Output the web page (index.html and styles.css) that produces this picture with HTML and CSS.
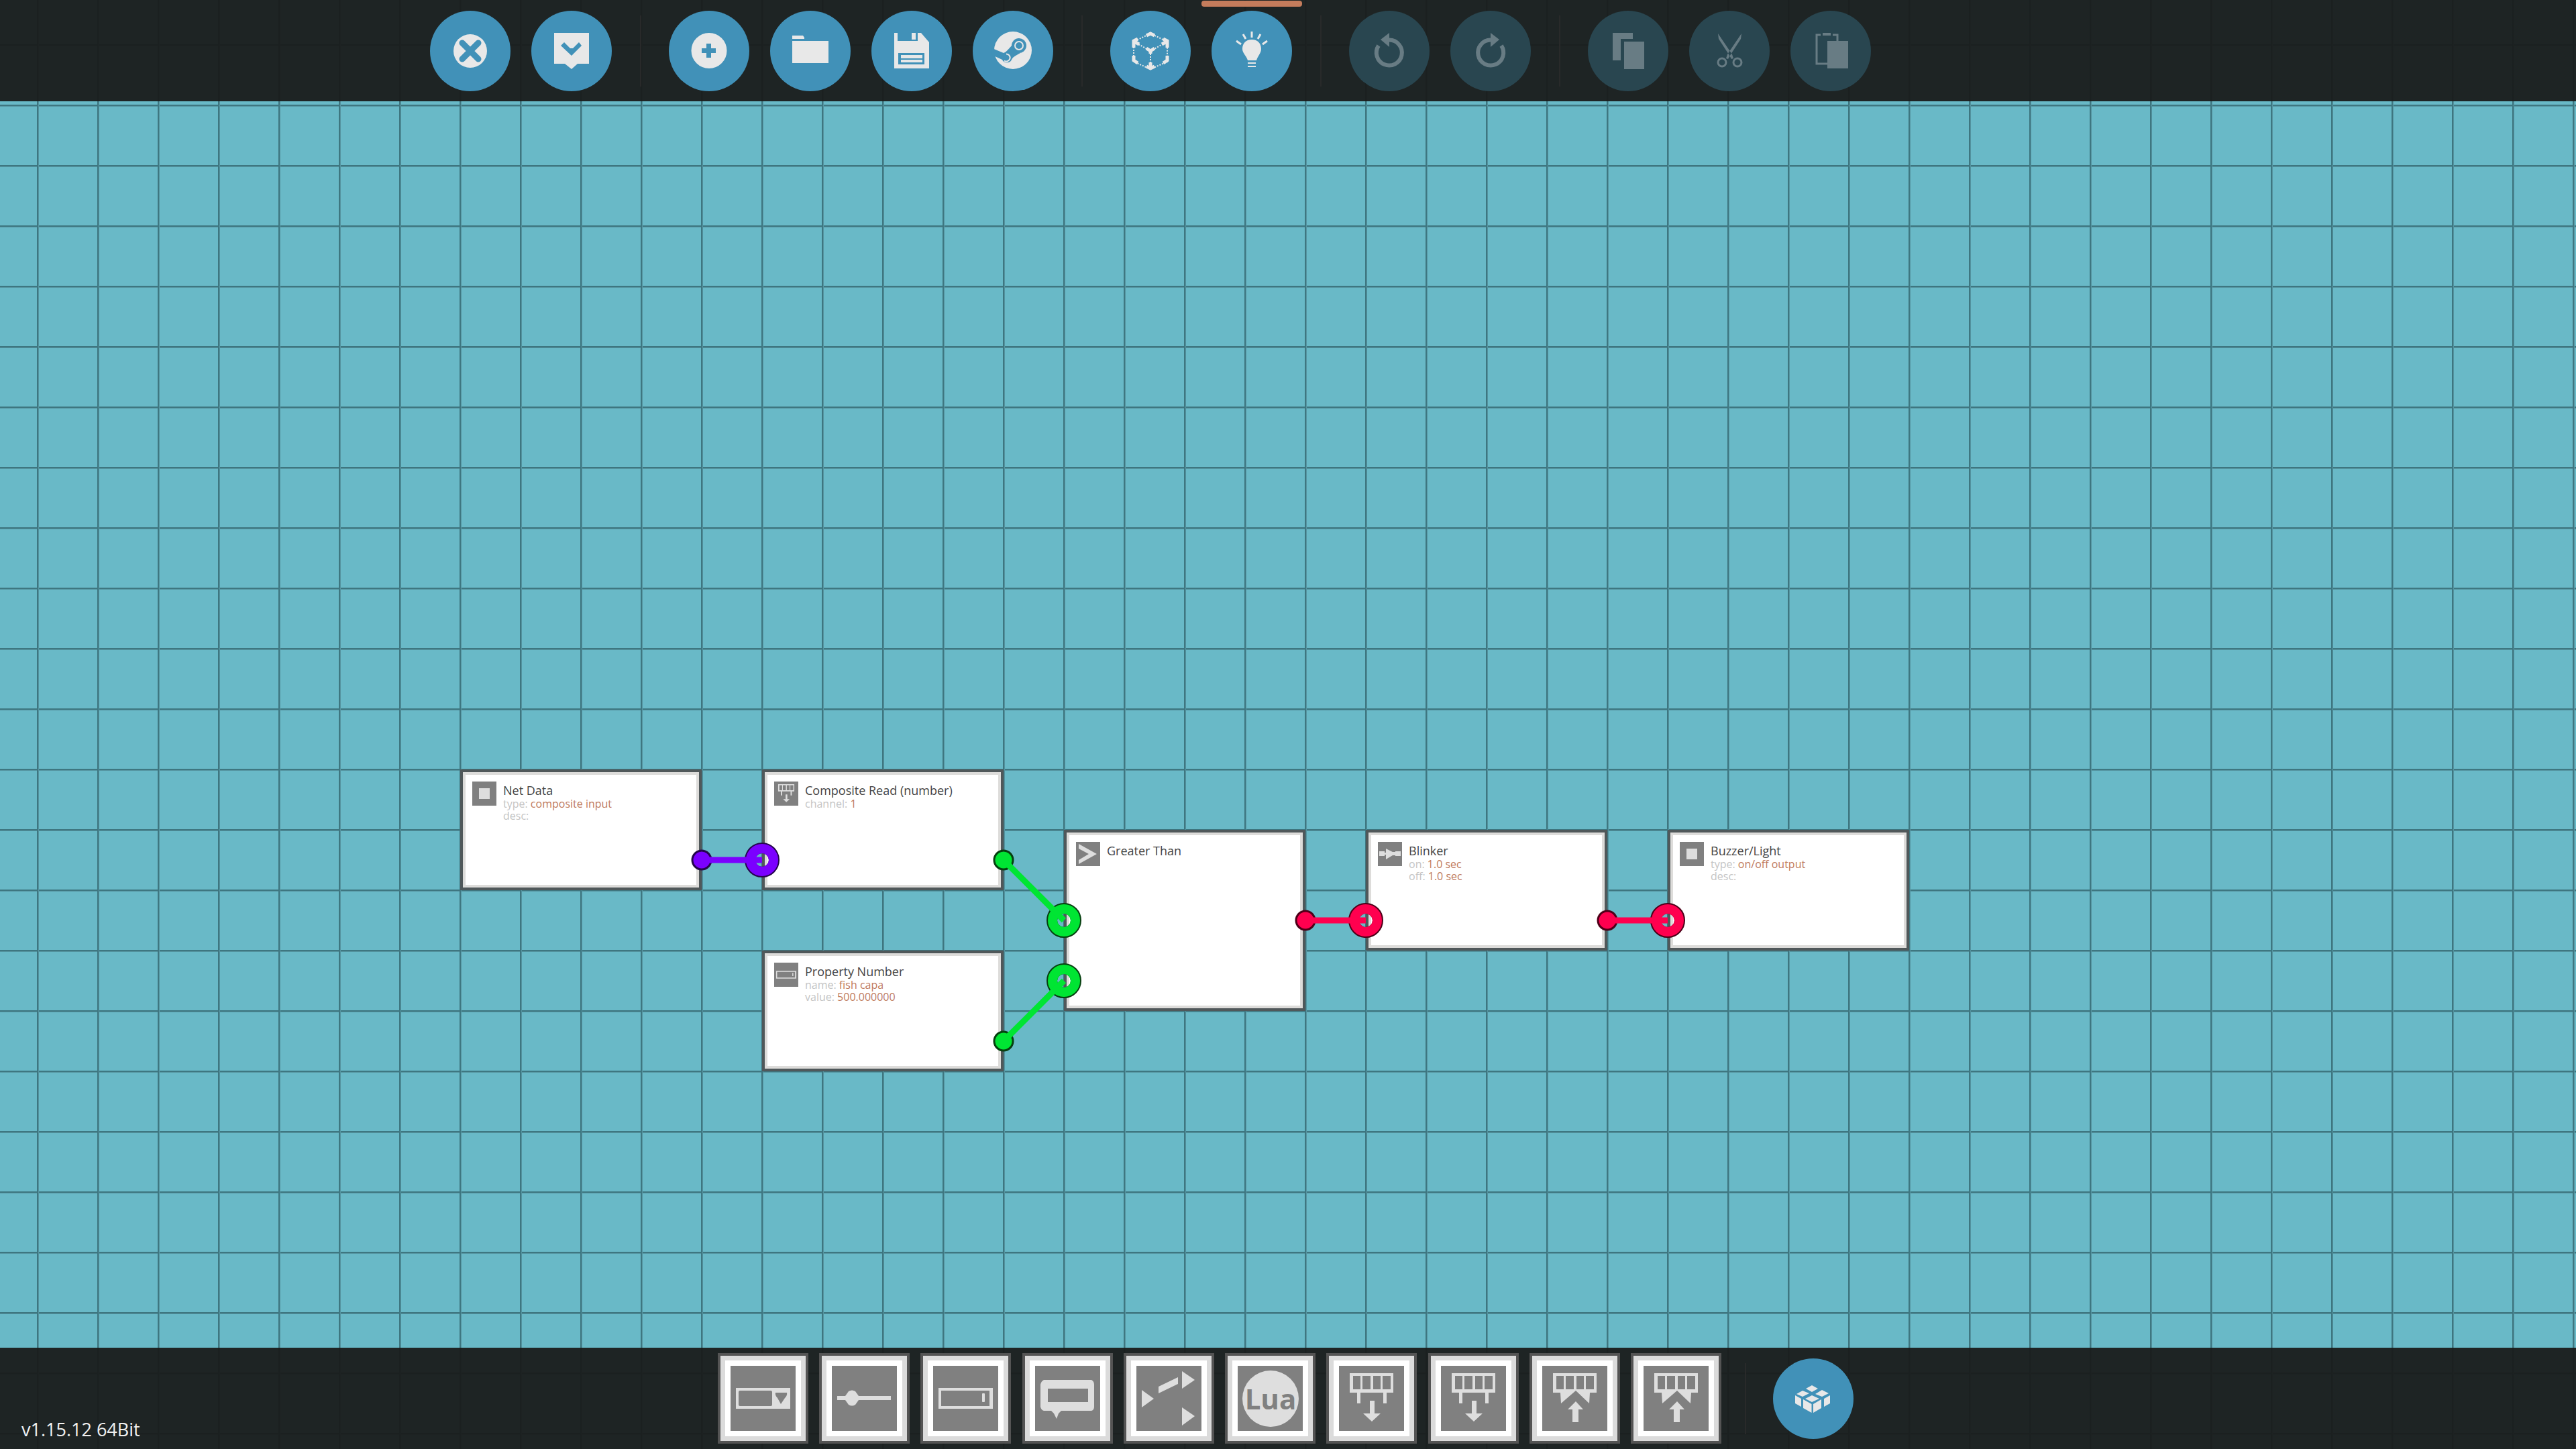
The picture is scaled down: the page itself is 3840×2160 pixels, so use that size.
FILE: index.html
```html
<!DOCTYPE html>
<html lang="en">
<head>
<meta charset="utf-8">
<title>Microcontroller Editor</title>
<link rel="stylesheet" href="styles.css">
</head>
<body>
<svg class="symbols" aria-hidden="true">
  <symbol id="i-dropdown" viewBox="0 0 97 97"><path fill-rule="evenodd" d="M8 33H89V64H8ZM14 37Q12 37 12 39V58Q12 60 14 60H60Q62 60 62 58V39Q62 37 60 37ZM67 40Q66 44 70 48L75 57L81 48Q85 44 84 40Z"/></symbol>
  <symbol id="i-slider" viewBox="0 0 97 97"><path d="M8 45H20L25 38Q30 35 35 38L40 45H88V51H40L35 58Q30 61 25 58L20 51H8Z"/></symbol>
  <symbol id="i-number" viewBox="0 0 97 97"><path fill-rule="evenodd" d="M8 33H89V64H8ZM12 37V60H84V37Z"/><rect x="73" y="41" width="4" height="13" rx="1"/></symbol>
  <symbol id="i-tooltip" viewBox="0 0 97 97"><path fill-rule="evenodd" d="M13 21H84Q88 23 88 28V61Q88 66 84 67H39L35 71L32 79L28 71L24 67H13Q9 66 8 61V28Q9 23 13 21ZM19 34V54H79V34Z"/></symbol>
  <symbol id="i-switch" viewBox="0 0 97 97"><path d="M8 36L26 49L8 62ZM68 8L87 21L68 34ZM68 62L87 75L68 89ZM33 31L62 17V27L33 41Z"/></symbol>
  <symbol id="i-read" viewBox="0 0 97 97"><path fill-rule="evenodd" d="M16 11H81V40H71V56H66V40H32V56H27V40H16ZM21 15V35H32V15ZM35 15V35H47V15ZM51 15V35H62V15ZM65 15V35H77V15ZM46 52H53V71H62L49 83L36 71H46Z"/></symbol>
  <symbol id="i-write" viewBox="0 0 97 97"><path fill-rule="evenodd" d="M16 11H81V40H71L70 56L50 37L28 56L27 40H16ZM21 15V35H32V15ZM35 15V35H47V15ZM51 15V35H62V15ZM65 15V35H77V15ZM50 53L61 65H54V84H45V65H38Z"/></symbol>
  <symbol id="i-square" viewBox="0 0 36 36"><path d="M10 10H26V26H10Z"/></symbol>
  <symbol id="i-greater" viewBox="0 0 36 36"><path d="M4 3L31 18L4 33V27L19 18L4 10Z"/></symbol>
  <symbol id="i-blinker" viewBox="0 0 36 36"><path d="M2 14H10V16H12V10L22 15H26V14H34V21H26V20H22L12 26V19H10V21H2Z"/></symbol>
</svg>

<header class="bar toolbar">
  <div class="group">
    <button class="round" aria-label="Close"><svg viewBox="0 0 120 120"><circle cx="60" cy="60" r="25"/><path class="cut round-cap" d="M48 48L72 72M72 48L48 72"/></svg></button>
    <button class="round" aria-label="Place"><svg viewBox="0 0 120 120"><path fill-rule="evenodd" d="M34 33H86V79H69L60 87L50 79H34ZM49 47L44 52L60 67L75 52L71 47L62 56H58Z"/></svg></button>
  </div>
  <div class="separator"></div>
  <div class="group">
    <button class="round" aria-label="New"><svg viewBox="0 0 120 120"><path fill-rule="evenodd" d="M60 33A26.500 26.500 0 0 1 60 86A26.500 26.500 0 0 1 60 33ZM56 49V56H49V63H56V70H63V63H70V56H63V49Z"/></svg></button>
    <button class="round" aria-label="Open"><svg viewBox="0 0 120 120"><path d="M33 37H49L51 40V42H33ZM33 45H87V78H33Z"/></svg></button>
    <button class="round" aria-label="Save"><svg viewBox="0 0 120 120"><path fill-rule="evenodd" d="M34 33H39V45H69V33H74L86 47V86H34ZM40 63V80H79V63Z"/><path d="M60 33H66V43H60ZM44 66H76V71H44ZM44 73H76V77H44Z"/></svg></button>
    <button class="round" aria-label="Steam Workshop"><svg viewBox="0 0 120 120"><circle cx="60" cy="59" r="28"/><path class="hole" d="M28 55.500L46 63C49 62 51 60 59 51L71 63C62 68 59 70 58 73A7.800 7.800 0 0 1 44 73L29 66Z"/><circle class="hole" cx="69" cy="52" r="11"/><circle class="ring" cx="69" cy="52" r="6"/><path class="ring" d="M50 64.500A5.500 5.500 0 1 1 47 74.500"/></svg></button>
  </div>
  <div class="separator"></div>
  <div class="group">
    <button class="round" aria-label="Wireframe"><svg viewBox="0 0 120 120"><path class="dotted" d="M60 34L35 46L60 60L85 46ZM35 46V76L60 87L85 76V46M60 60V87"/><path class="corners" d="M54 37L60 34L66 37M35 55V45L41 42M36 46L43 50M85 55V45L79 42M84 46L77 50M54 56L60 60L66 56M60 60V64M35 67V74L41 78M85 67V74L79 78M60 77V86M54 83L60 86L66 83"/></svg></button>
    <button class="round active" aria-label="Logic"><svg viewBox="0 0 120 120"><path d="M60 43C69 43 74 49 74 57C74 63 69 67 67 74H54C52 67 46 63 46 57C46 49 51 43 60 43ZM54 77H66V79H54ZM54 82H66V84H54Z"/><path class="rays" d="M60 31V40M47 35L51 42M73 35L69 42M37 45L44 50M83 45L76 50"/></svg></button>
  </div>
  <div class="separator"></div>
  <div class="group">
    <button class="round" disabled aria-label="Undo"><svg viewBox="0 0 120 120"><path class="turn" d="M60 43.500A19 19 0 1 1 44 52"/><path d="M60 33V54L47 43Z"/></svg></button>
    <button class="round" disabled aria-label="Redo"><svg viewBox="0 0 120 120"><path class="turn" d="M60 43.500A19 19 0 1 0 76 52"/><path d="M60 33V54L73 43Z"/></svg></button>
  </div>
  <div class="separator"></div>
  <div class="group">
    <button class="round" disabled aria-label="Copy"><svg viewBox="0 0 120 120"><path d="M37 33H67V42H49V74H37ZM54 46H84V87H54Z"/></svg></button>
    <button class="round" disabled aria-label="Cut"><svg viewBox="0 0 120 120"><path d="M43 34L64 65L66 71L63 72L59 65L44 42ZM78 34L57 65L55 71L58 72L62 65L77 42Z"/><circle class="ring thick" cx="49" cy="77" r="6"/><circle class="ring thick" cx="72" cy="77" r="6"/></svg></button>
    <button class="round" disabled aria-label="Paste"><svg viewBox="0 0 120 120"><path class="ring thick" d="M45 36H39V79H56M63 36H70V46"/><path d="M48 33H60V37H48ZM55 45H86V86H55Z"/></svg></button>
  </div>
</header>

<main class="canvas">
  <article class="node net-data">
    <svg class="node-icon"><use href="#i-square"/></svg>
    <div class="node-text"><h2>Net Data</h2><p>type: <span>composite input</span></p><p>desc:</p></div>
  </article>
  <article class="node composite-read">
    <svg class="node-icon"><use href="#i-read"/></svg>
    <div class="node-text"><h2>Composite Read (number)</h2><p>channel: <span>1</span></p></div>
  </article>
  <article class="node property-number">
    <svg class="node-icon"><use href="#i-number"/></svg>
    <div class="node-text"><h2>Property Number</h2><p>name: <span>fish capa</span></p><p>value: <span>500.000000</span></p></div>
  </article>
  <article class="node greater-than">
    <svg class="node-icon"><use href="#i-greater"/></svg>
    <div class="node-text"><h2>Greater Than</h2></div>
  </article>
  <article class="node blinker">
    <svg class="node-icon"><use href="#i-blinker"/></svg>
    <div class="node-text"><h2>Blinker</h2><p>on: <span>1.0 sec</span></p><p>off: <span>1.0 sec</span></p></div>
  </article>
  <article class="node buzzer">
    <svg class="node-icon"><use href="#i-square"/></svg>
    <div class="node-text"><h2>Buzzer/Light</h2><p>type: <span>on/off output</span></p><p>desc:</p></div>
  </article>
  <svg class="wires" aria-hidden="true">
    <g class="composite">
      <circle class="out" cx="1046" cy="1131" r="14"/>
      <circle class="rim" cx="1136" cy="1131" r="18"/><circle class="in" cx="1136" cy="1131" r="17"/>
      <path class="wire" d="M1046 1131H1136"/>
    </g>
    <g class="number">
      <circle class="out" cx="1496" cy="1131" r="14"/><circle class="out" cx="1496" cy="1401" r="14"/>
      <circle class="rim" cx="1586" cy="1221" r="18"/><circle class="in" cx="1586" cy="1221" r="17"/>
      <circle class="rim" cx="1586" cy="1311" r="18"/><circle class="in" cx="1586" cy="1311" r="17"/>
      <path class="wire" d="M1496 1131L1586 1221M1496 1401L1586 1311"/>
    </g>
    <g class="on-off">
      <circle class="out" cx="1946" cy="1221" r="14"/><circle class="out" cx="2396" cy="1221" r="14"/>
      <circle class="rim" cx="2036" cy="1221" r="18"/><circle class="in" cx="2036" cy="1221" r="17"/>
      <circle class="rim" cx="2486" cy="1221" r="18"/><circle class="in" cx="2486" cy="1221" r="17"/>
      <path class="wire" d="M1946 1221H2036M2396 1221H2486"/>
    </g>
  </svg>
</main>

<footer class="bar palette">
  <p class="version">v1.15.12 64Bit</p>
  <div class="tiles">
    <button class="tile" aria-label="Property Dropdown"><svg><use href="#i-dropdown"/></svg></button>
    <button class="tile" aria-label="Property Slider"><svg><use href="#i-slider"/></svg></button>
    <button class="tile" aria-label="Property Number"><svg><use href="#i-number"/></svg></button>
    <button class="tile" aria-label="Tooltip"><svg><use href="#i-tooltip"/></svg></button>
    <button class="tile" aria-label="Switchbox"><svg><use href="#i-switch"/></svg></button>
    <button class="tile" aria-label="Lua Script"><svg viewBox="0 0 97 97"><circle cx="49" cy="49" r="42"/><text x="49" y="65">Lua</text></svg></button>
    <button class="tile" aria-label="Composite Read (number)"><svg><use href="#i-read"/></svg></button>
    <button class="tile" aria-label="Composite Read (on/off)"><svg><use href="#i-read"/></svg></button>
    <button class="tile" aria-label="Composite Write (number)"><svg><use href="#i-write"/></svg></button>
    <button class="tile" aria-label="Composite Write (on/off)"><svg><use href="#i-write"/></svg></button>
  </div>
  <div class="separator"></div>
  <button class="round" aria-label="Components"><svg viewBox="0 0 120 120"><path d="M58 40L67 45L58 50L49 45ZM44 48L54 52L44 57L35 53ZM73 47L83 52L73 57L63 53ZM58 55L69 60L58 65L48 60ZM33 55L42 60V72L33 67ZM45 61L57.500 68V81L45 74ZM60 68L72 61V74L60 81ZM76 60L85 55V67L76 72Z"/></svg></button>
</footer>
</body>
</html>
```
FILE: styles.css
```css
* {
  box-sizing: border-box;
}

body {
  margin: 0;
  min-height: 100vh;
  display: grid;
  grid-template-rows: auto 1fr auto;
  font-family: "Open Sans", "Noto Sans", sans-serif;
  background-color: #69b9c7;
  background-image:
    linear-gradient(to right, #3e7680 2px, #5594a0 2px 3px, transparent 3px),
    linear-gradient(to bottom, #3e7680 2px, #5594a0 2px 3px, transparent 3px);
  background-size: 90px 90px;
  background-position: 55px 0, 0 66px;
}

h2,
p {
  margin: 0;
  font-weight: 400;
}

button {
  padding: 0;
  border: 0;
  font: inherit;
}

.symbols {
  position: absolute;
  width: 0;
  height: 0;
}

/* Bars */

.bar {
  display: flex;
  align-items: center;
  background: rgba(25, 27, 25, 0.94);
}

.toolbar {
  padding: 16px 0 15px 641px;
}

.group {
  display: flex;
  gap: 31px;
}

.separator {
  flex: none;
  width: 2px;
  height: 106px;
  margin: 0 41px 0 42px;
  background: #292a2a;
}

.round {
  position: relative;
  flex: none;
  width: 120px;
  height: 120px;
  border-radius: 50%;
  background: #4191b8;
  color: #e8e8e8;
}

.round:disabled {
  background: #294650;
  color: #687c84;
}

.round svg {
  display: block;
  width: 120px;
  height: 120px;
  fill: currentColor;
}

.round.active::before {
  content: "";
  position: absolute;
  left: -15px;
  right: -15px;
  top: -15px;
  height: 9px;
  border-radius: 4px;
  background: #c47c5c;
}

.round .cut {
  stroke: #4191b8;
  stroke-width: 9;
  stroke-linecap: round;
}

.round .hole {
  fill: #4191b8;
}

.round .ring,
.round .dotted,
.round .corners,
.round .rays,
.round .turn {
  fill: none;
  stroke: currentColor;
  stroke-width: 2;
}

.round .thick,
.round .rays {
  stroke-width: 3;
}

.round .dotted {
  stroke-dasharray: 2 2;
}

.round .corners {
  stroke-width: 5;
}

.round .turn {
  stroke-width: 6;
}

/* Logic canvas */

.canvas {
  position: relative;
  overflow: hidden;
}

.node {
  position: absolute;
  display: flex;
  align-items: flex-start;
  gap: 10px;
  width: 360px;
  height: 180px;
  padding: 14px;
  border: 4px solid #50585a;
  background: #fff;
  box-shadow: inset 0 0 0 4px #dddcda;
}

.net-data {
  left: 686px;
  top: 996px;
}

.composite-read {
  left: 1136px;
  top: 996px;
}

.property-number {
  left: 1136px;
  top: 1266px;
}

.greater-than {
  left: 1586px;
  top: 1086px;
  height: 270px;
}

.blinker {
  left: 2036px;
  top: 1086px;
}

.buzzer {
  left: 2486px;
  top: 1086px;
}

.node-icon {
  flex: none;
  width: 36px;
  height: 36px;
  background: #808080;
  fill: #dedede;
}

.node-text {
  padding-top: 2px;
  font-size: 16px;
  line-height: 18px;
  color: #c4c4c4;
}

.node-text h2 {
  font-size: 18px;
  line-height: 22px;
  color: #444;
}

.node-text span {
  color: #c07a5c;
}

.wires {
  position: absolute;
  inset: 0;
  width: 100%;
  height: 100%;
  pointer-events: none;
}

.composite {
  --signal: #7b00ff;
  --rim: #25064d;
}

.number {
  --signal: #00e533;
  --rim: #064010;
}

.on-off {
  --signal: #ff004f;
  --rim: #4d0018;
}

.out {
  fill: var(--signal);
  stroke: var(--rim);
  stroke-width: 3;
}

.rim {
  fill: none;
  stroke: var(--rim);
  stroke-width: 16;
}

.in {
  fill: none;
  stroke: var(--signal);
  stroke-width: 14;
}

.wire {
  fill: none;
  stroke: var(--signal);
  stroke-width: 9;
}

/* Component palette */

.palette {
  padding: 8px 0;
}

.version {
  width: 1070px;
  flex: none;
  align-self: flex-end;
  padding: 0 0 6px 32px;
  font-size: 27px;
  line-height: 30px;
  color: #f0f0f0;
}

.tiles {
  flex: none;
  display: flex;
  justify-content: space-between;
  width: 1496px;
}

.palette .separator {
  margin: 0 40px 0 35px;
}

.tile {
  padding: 15px;
  border: 4px solid #545454;
  background: #fff;
  box-shadow: inset 0 0 0 7px #dbdbdb;
}

.tile svg {
  display: block;
  width: 97px;
  height: 97px;
  background: #808080;
  fill: #dedede;
}

.tile text {
  fill: #808080;
  font-size: 42px;
  font-weight: 700;
  text-anchor: middle;
}
```
